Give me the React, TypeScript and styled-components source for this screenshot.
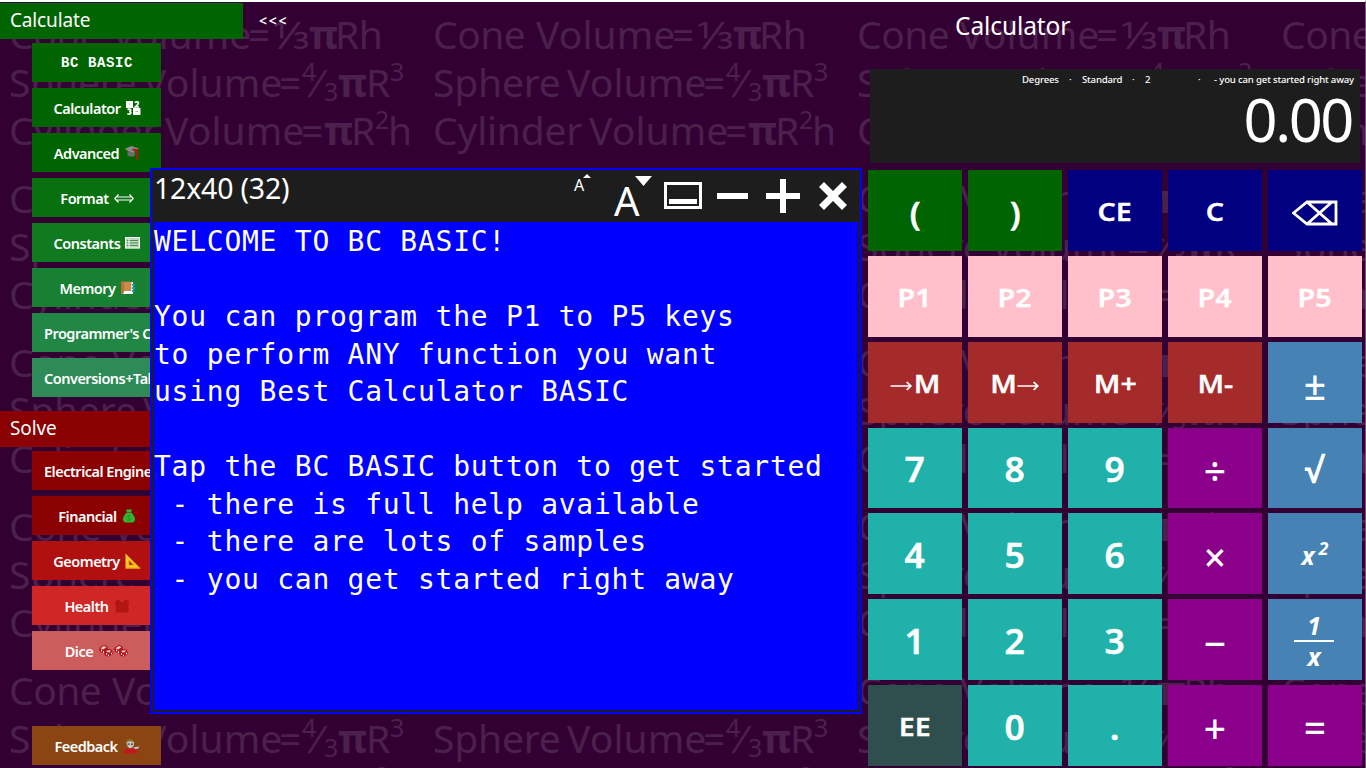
import React from 'react';
import styled, { createGlobalStyle, css } from 'styled-components';

const GlobalStyle = createGlobalStyle`
  *, *::before, *::after { box-sizing: border-box; }
  body { margin: 0; background: #330033; overflow: hidden; }
`;

const UI = `"Noto Sans", "Open Sans", sans-serif`;

const Page = styled.div`
  position: relative;
  width: 1366px;
  height: 768px;
  overflow: hidden;
  display: flex;
  justify-content: space-between;
  border-top: 2px solid #fff;
  border-right: 1px solid #77587a;
  background: #330033;
  color: #fff;
  font-family: ${UI};
`;

/* ---------- formula wallpaper ---------- */

const Wallpaper = styled.div`
  position: absolute;
  inset: 0;
  display: grid;
  grid-template-columns: repeat(4, 424px);
  grid-auto-rows: 164px;
  padding: 8px 0 0 9px;
  color: #4c204c;
  font-size: 39px;
  line-height: 48px;
  white-space: pre;
  overflow: hidden;
`;

const Formula = styled.div`
  display: flex;
  height: 48px;
`;

const Term = styled.span<{ $w: number; $ls?: number }>`
  flex: none;
  width: ${(p) => p.$w}px;
  letter-spacing: ${(p) => p.$ls ?? 0}px;
`;

const Pi = styled(Term)`
  font-weight: 700;
`;

const Raised = styled(Term)`
  font-size: 25px;
  line-height: 24px;
  padding-top: 1px;
`;

const Lowered = styled(Term)`
  font-size: 25px;
  line-height: 24px;
  padding-top: 21px;
`;

const Third = styled(Term)`
  transform: scaleX(1.17);
  transform-origin: 0 50%;
`;

const FormulaBlock = () => (
  <div>
    <Formula>
      <Term $w={103} $ls={-0.5}>Cone</Term>
      <Term $w={136} $ls={0.1}>Volume</Term>
      <Term $w={25}>=</Term>
      <Third $w={36}>⅓</Third>
      <Pi $w={26}>π</Pi>
      <Term $w={50} $ls={-0.6}>Rh</Term>
    </Formula>
    <Formula>
      <Term $w={134} $ls={-0.2}>Sphere</Term>
      <Term $w={136} $ls={0.1}>Volume</Term>
      <Term $w={23}>=</Term>
      <Raised $w={13}>4</Raised>
      <Term $w={9}>⁄</Term>
      <Lowered $w={14}>3</Lowered>
      <Pi $w={28}>π</Pi>
      <Term $w={24}>R</Term>
      <Raised $w={16}>3</Raised>
    </Formula>
    <Formula>
      <Term $w={156} $ls={-0.2}>Cylinder</Term>
      <Term $w={136} $ls={0.1}>Volume</Term>
      <Term $w={23}>=</Term>
      <Pi $w={27}>π</Pi>
      <Term $w={24}>R</Term>
      <Raised $w={13}>2</Raised>
      <Term $w={24}>h</Term>
    </Formula>
  </div>
);

/* ---------- sidebar ---------- */

const Sidebar = styled.nav`
  position: relative;
  width: 300px;
  height: 766px;
  display: flex;
  flex-direction: column;
  padding: 1px 0;
`;

const HeaderRow = styled.div`
  display: flex;
  align-items: center;
  gap: 16px;
`;

const Section = styled.h2<{ $bg: string }>`
  margin: 0;
  width: 243px;
  height: 36px;
  padding-left: 10px;
  background: ${(p) => p.$bg};
  font-size: 19px;
  font-weight: 400;
  line-height: 34px;
  letter-spacing: -0.15px;
`;

const Collapse = styled.span`
  font-size: 14px;
  font-weight: 600;
  letter-spacing: 1.8px;
  line-height: 34px;
`;

const Items = styled.div<{ $gapAfter?: number }>`
  display: flex;
  flex-direction: column;
  gap: 6px;
  padding: 4px 0 0 32px;
  margin-bottom: ${(p) => p.$gapAfter ?? 0}px;
`;

const Item = styled.button<{ $bg: string; $mono?: boolean }>`
  display: flex;
  align-items: center;
  justify-content: safe center;
  gap: 5px;
  width: 129px;
  height: 39px;
  padding: 1px 11px 0 12px;
  border: 0;
  overflow: hidden;
  background: ${(p) => p.$bg};
  color: #fff;
  font-family: ${UI};
  font-size: 14.5px;
  font-weight: 600;
  letter-spacing: -0.5px;
  white-space: nowrap;
  svg { flex: none; }
  ${(p) =>
    p.$mono &&
    css`
      padding-top: 0;
      font-family: "Liberation Mono", monospace;
      font-size: 14px;
      font-weight: 700;
      letter-spacing: 0.6px;
    `}
`;

const Digits = () => (
  <svg width="15" height="14" viewBox="0 0 15 14">
    <rect x="0" y="0" width="7" height="7" fill="#fff" />
    <rect x="7" y="7" width="7.5" height="7" fill="#fff" />
    <rect x="3" y="2" width="1" height="2" fill="#b9d6b9" />
    <path d="M8.600 1.600Q11 .3 12.400 1.500 12.600 3.200 9.300 6H13M1.500 8.400Q5 7.600 4.600 9.400 4.400 10.300 3 10.400 5.200 10.600 4.800 12 4 13.600 1.300 12.700" fill="none" stroke="#fff" strokeWidth="1.700" />
    <path d="M9.500 10.500h2.500" stroke="#9cc49c" />
  </svg>
);
const Cap = () => (
  <svg width="16" height="16" viewBox="0 0 16 16">
    <path d="M3.500 5v5.500Q7.500 13 11 10.500V5z" fill="#6b6b6b" />
    <path d="M.5 4L7.500 1 15 3.500 8.500 7.500z" fill="#8d8d8d" />
    <path d="M8.500 4.500L13.200 5.200V14.500" fill="none" stroke="#b3190e" strokeWidth="2" />
  </svg>
);
const DoubleArrow = () => (
  <svg width="20" height="9" viewBox="0 0 20 9">
    <path d="M4.500 .5L.8 4.500l3.700 4M15.500 .5l3.700 4-3.700 4M3 3h14M3 6h14" fill="none" stroke="#fff" strokeWidth="1.200" />
  </svg>
);
const Table = () => (
  <svg width="15" height="12" viewBox="0 0 15 12">
    <rect x=".5" y=".5" width="14" height="10.600" fill="#b9d8bc" stroke="#fff" />
    <path d="M2 3.500h11M2 6h11M2 8.500h11" stroke="#2f7d3b" strokeWidth=".8" />
    <path d="M4 2v8" stroke="#fff" />
  </svg>
);
const Book = () => (
  <svg width="14" height="14" viewBox="0 0 14 14">
    <path d="M2 1h10v12H2z" fill="#fff" />
    <path d="M0 1.500Q0 .3 1.200 .3H3V11L2 13H.8Q0 13 0 12z" fill="#b87333" />
    <path d="M3 .8H10.400V10H3z" fill="#c98a4b" />
    <path d="M11 4h2.500M11 7h3M11 10h2.500" stroke="#19a5c9" strokeWidth="1.800" />
  </svg>
);
const MoneyBag = () => (
  <svg width="14" height="14" viewBox="0 0 14 14">
    <path d="M4 .5h6L9.200 3H4.800zM4.600 3.500h4.800Q13.200 7.500 13 10.500 12.600 13.600 9.600 13.600H4.400Q1.200 13.600 1 10.500.8 7.500 4.600 3.500z" fill="#2fb52f" />
    <path d="M8.600 6.500Q5.500 5.800 5.600 7.600 7 8.900 8.300 9.800 8.400 11.600 5.400 11" fill="none" stroke="#1e8a25" strokeWidth=".9" />
  </svg>
);
const SetSquare = () => (
  <svg width="16" height="16" viewBox="0 0 16 16">
    <path d="M.5 .5V15.500H15.500z" fill="#ffc928" />
    <path d="M4 7.500V12H8.600z" fill="#b01010" stroke="#d98b00" strokeWidth=".8" />
    <path d="M.5 15h15" stroke="#e99a12" />
  </svg>
);
const HealthMark = () => (
  <svg width="16" height="15" viewBox="0 0 16 15">
    <path d="M2 1.500L4.500 .8 8 3.400 11.500 .8 14 1 15.200 3.500 14 7.500 15 11 13 14 9.500 13 8 14 6 13 3 14 1.300 11.500 2.200 8 .8 4z" fill="#b01712" />
  </svg>
);
const Dice = () => (
  <svg width="31" height="14" viewBox="0 0 31 14">
    {[0, 15].map((x) => (
      <g key={x} transform={`translate(${x} 0)`}>
        <path d="M1 4L6 .7 9.500 2.500 10 5 14 5.500 15 10 10.500 13 7 11.500 6 9 2 8z" fill="#b5161a" />
        <path d="M2.500 4.300L6 2l2.500 1.300L5 5.600zM9 6.500L13 6.300 11.500 8.500 8.500 8z" fill="#fff" opacity=".8" />
        <path d="M3 6.500h1M5 8h1M8 10h1M10 11.500h1M13 9.500h1M5 3.500h1" stroke="#fff" strokeWidth="1.300" />
      </g>
    ))}
  </svg>
);
const Person = () => (
  <svg width="17" height="16" viewBox="0 0 17 16">
    <path d="M3 7Q2 1 7 .8 12 1 11.500 6L10 4H4.500z" fill="#8c6a1c" />
    <path d="M3.500 4.500Q7 2 11 4.500 11.500 9 7.500 10.500 3.800 9.500 3.500 4.500z" fill="#c4c4c4" />
    <path d="M4.500 6.200h2M8 6.200h2" stroke="#333" strokeWidth="1.300" />
    <path d="M.5 15.500Q1 11 5 10.600h5Q14 11 14.500 15.500z" fill="#c4161c" />
    <path d="M10.500 9.500L16.500 8.500 15 10.500 12 11z" fill="#d0d0d0" />
  </svg>
);

type Entry = { label: string; bg: string; icon?: React.ReactNode; mono?: boolean };

const calculate: Entry[] = [
  { label: 'BC BASIC', bg: '#006400', mono: true },
  { label: 'Calculator', bg: '#006400', icon: <Digits /> },
  { label: 'Advanced', bg: '#006400', icon: <Cap /> },
  { label: 'Format', bg: '#08700f', icon: <DoubleArrow /> },
  { label: 'Constants', bg: '#107a20', icon: <Table /> },
  { label: 'Memory', bg: '#188032', icon: <Book /> },
  { label: "Programmer's Calculator", bg: '#208744' },
  { label: 'Conversions+Tables', bg: '#2e8b57' },
];

const solve: Entry[] = [
  { label: 'Electrical Engineering', bg: '#8b0000' },
  { label: 'Financial', bg: '#8b0000', icon: <MoneyBag /> },
  { label: 'Geometry', bg: '#b01010', icon: <SetSquare /> },
  { label: 'Health', bg: '#cf2626', icon: <HealthMark /> },
  { label: 'Dice', bg: '#cd5c5c', icon: <Dice /> },
];

const Menu = ({ entries, gapAfter }: { entries: Entry[]; gapAfter?: number }) => (
  <Items $gapAfter={gapAfter}>
    {entries.map((e) => (
      <Item key={e.label} $bg={e.bg} $mono={e.mono}>
        {e.label}
        {e.icon}
      </Item>
    ))}
  </Items>
);

/* ---------- BASIC console window ---------- */

const Window = styled.section`
  position: absolute;
  left: 150px;
  top: 166px;
  width: 712px;
  height: 546px;
  display: flex;
  flex-direction: column;
  padding: 0 2px 2px;
  border: 2px solid #0000ff;
  background: #1d1d1d;
`;

const TitleBar = styled.header`
  display: flex;
  justify-content: space-between;
  height: 52px;
  padding: 0 10px 0 0;
`;

const WindowTitle = styled.span`
  font-size: 28.5px;
  line-height: 36px;
  letter-spacing: -0.2px;
`;

const Tools = styled.div`
  display: flex;
  height: 52px;
`;

const FontTool = styled.div<{ $size: number; $w: number; $top: number }>`
  display: flex;
  width: ${(p) => p.$w}px;
  padding-top: ${(p) => p.$top}px;
  font-size: ${(p) => p.$size}px;
  line-height: 1;
  svg { flex: none; }
`;

const GrowMark = styled.svg`
  margin: -3px 0 0 -1px;
`;

const ShrinkMark = styled.svg`
  margin: -5px 0 0 -5px;
`;

const Screen = styled.pre`
  flex: 1;
  margin: 0;
  padding: 1px 0 0;
  background: #0000ff;
  font-family: "DejaVu Sans Mono", monospace;
  font-size: 28px;
  line-height: 37.5px;
  letter-spacing: 0.74px;
`;

const program = `WELCOME TO BC BASIC!

You can program the P1 to P5 keys
to perform ANY function you want
using Best Calculator BASIC

Tap the BC BASIC button to get started
 - there is full help available
 - there are lots of samples
 - you can get started right away`;

/* ---------- calculator ---------- */

const Calculator = styled.main`
  position: relative;
  width: 497px;
  height: 766px;
  display: flex;
  flex-direction: column;
`;

const Title = styled.h1`
  margin: 0;
  height: 67px;
  padding: 7px 0 0 87px;
  font-size: 24.5px;
  font-weight: 400;
  line-height: 34px;
  letter-spacing: -0.1px;
`;

const Display = styled.div`
  width: 490px;
  height: 94px;
  margin: 0 0 7.3px 2px;
  background: #1d1d1d;
`;

const Status = styled.div`
  display: flex;
  height: 20px;
  padding-left: 152px;
  font-size: 9.6px;
  font-weight: 500;
  line-height: 21px;
  white-space: pre;
`;

const StatusItem = styled.span<{ $w: number }>`
  flex: none;
  width: ${(p) => p.$w}px;
  letter-spacing: -0.17px;
`;

const Value = styled.div`
  padding-right: 8px;
  font-size: 59.5px;
  line-height: 59px;
  letter-spacing: -2.4px;
  text-align: right;
`;

const Keys = styled.div`
  display: grid;
  grid-template-columns: repeat(5, 94px);
  grid-template-rows: repeat(7, 80.8px);
  gap: 5px 6px;
`;

const Key = styled.button<{ $bg: string; $size?: number; $italic?: boolean }>`
  display: flex;
  align-items: center;
  justify-content: center;
  padding: 4px 0 0;
  border: 0;
  background: ${(p) => p.$bg};
  color: #fff;
  font-family: ${UI};
  font-size: ${(p) => p.$size ?? 24.5}px;
  font-weight: 700;
  font-style: ${(p) => (p.$italic ? 'italic' : 'normal')};
  line-height: 1;
`;

const Wide = styled.span`
  display: inline-flex;
  align-items: center;
  font-weight: 600;
  -webkit-text-stroke: 0.3px #fff;
  transform: scaleX(1.17);
`;

const Digit = styled.span`
  font-weight: 600;
  -webkit-text-stroke: 0.4px #fff;
  transform: scaleX(1.06);
`;

const Op = styled.span`
  padding-top: 1px;
  font-weight: 500;
`;

const Root = styled.span`
  margin-left: -3px;
  font-weight: 700;
`;

const Exponent = styled.span`
  font-size: 18px;
  margin: -16px 0 0 4px;
`;

const Fraction = styled.span`
  display: flex;
  flex-direction: column;
  align-items: center;
  width: 40px;
  margin-left: -2px;
  padding-top: 2px;
  line-height: 22px;
`;

const Over = styled.span`
  width: 40px;
  height: 27px;
  border-bottom: 2px solid #fff;
`;

const Under = styled.span`
  height: 29px;
  line-height: 29px;
`;

const ArrowMark = styled.svg`
  margin-top: 3px;
`;

const Arrow = () => (
  <ArrowMark width="20" height="12" viewBox="0 0 20 12">
    <path d="M0 6h17.500M14 2l3.500 4L14 10" fill="none" stroke="#fff" strokeWidth="1.600" />
  </ArrowMark>
);

const Backspace = () => (
  <svg width="46" height="26" viewBox="0 0 46 26">
    <path d="M15 2H44V24H15L1.500 13zM15 2L40 24M40 2L15 24" fill="none" stroke="#fff" strokeWidth="2.800" />
  </svg>
);

const green = '#006400';
const navy = '#000080';
const pink = '#ffc0cb';
const brown = '#a52a2a';
const steel = '#4682b4';
const teal = '#20b2aa';
const purple = '#8b008b';

type KeyDef = { id: string; bg: string; size?: number; italic?: boolean; face?: React.ReactNode };

const num = (id: string): KeyDef => ({ id, bg: teal, size: 33.5, face: <Digit>{id}</Digit> });
const op = (id: string, bg = purple): KeyDef => ({ id, bg, size: 39, face: <Op>{id}</Op> });

const keys: KeyDef[] = [
  { id: '(', bg: green, size: 32, face: <Digit>(</Digit> },
  { id: ')', bg: green, size: 32, face: <Digit>)</Digit> },
  { id: 'CE', bg: navy },
  { id: 'C', bg: navy },
  { id: 'back', bg: navy, face: <Backspace /> },
  ...['P1', 'P2', 'P3', 'P4', 'P5'].map((id) => ({ id, bg: pink })),
  { id: 'store', bg: brown, face: <Wide><Arrow />M</Wide> },
  { id: 'recall', bg: brown, face: <Wide>M<Arrow /></Wide> },
  { id: 'M+', bg: brown },
  { id: 'M-', bg: brown },
  op('±', steel),
  num('7'), num('8'), num('9'), op('÷'),
  { id: 'root', bg: steel, size: 34, face: <Root>√</Root> },
  num('4'), num('5'), num('6'), op('×'),
  { id: 'square', bg: steel, italic: true, face: <>x<Exponent>2</Exponent></> },
  num('1'), num('2'), num('3'), op('−'),
  { id: 'inverse', bg: steel, italic: true, face: <Fraction><Over>1</Over><Under>x</Under></Fraction> },
  { id: 'EE', bg: '#2f4f4f' },
  num('0'), num('.'), op('+'), op('='),
];

export default function App() {
  return (
    <>
      <GlobalStyle />
      <Page>
        <Wallpaper>
          {Array.from({ length: 20 }, (_, i) => (
            <FormulaBlock key={i} />
          ))}
        </Wallpaper>

        <Sidebar>
          <HeaderRow>
            <Section $bg="#006400">Calculate</Section>
            <Collapse>&lt;&lt;&lt;</Collapse>
          </HeaderRow>
          <Menu entries={calculate} gapAfter={14} />
          <Section $bg="#8b0000">Solve</Section>
          <Menu entries={solve} gapAfter={52} />
          <Menu entries={[{ label: 'Feedback', bg: '#8b4513', icon: <Person /> }]} />
        </Sidebar>

        <Calculator>
          <Title>Calculator</Title>
          <Display>
            <Status>
              <StatusItem $w={47}>Degrees</StatusItem>
              <StatusItem $w={13}>·</StatusItem>
              <StatusItem $w={50}>Standard</StatusItem>
              <StatusItem $w={13}>·</StatusItem>
              <StatusItem $w={53}>2</StatusItem>
              <StatusItem $w={16}>·</StatusItem>
              <StatusItem $w={142}>- you can get started right away</StatusItem>
            </Status>
            <Value>0.00</Value>
          </Display>
          <Keys>
            {keys.map((k) => (
              <Key key={k.id} $bg={k.bg} $size={k.size} $italic={k.italic}>
                {k.face ?? <Wide>{k.id}</Wide>}
              </Key>
            ))}
          </Keys>
        </Calculator>

        <Window>
          <TitleBar>
            <WindowTitle>12x40 (32)</WindowTitle>
            <Tools>
              <FontTool $size={16} $w={40} $top={7}>
                A
                <GrowMark width="8" height="4" viewBox="0 0 8 4">
                  <path d="M0 4L4 0l4 4z" fill="#fff" />
                </GrowMark>
              </FontTool>
              <FontTool $size={40} $w={50} $top={11}>
                A
                <ShrinkMark width="17" height="10" viewBox="0 0 17 10">
                  <path d="M0 0h17L8.500 10z" fill="#fff" />
                </ShrinkMark>
              </FontTool>
              <svg width="184" height="52" viewBox="0 0 184 52">
                <path d="M1.500 13.500h35v24h-35z" fill="none" stroke="#fff" strokeWidth="3" />
                <path d="M5 31.500h28" stroke="#fff" strokeWidth="5" />
                <path d="M53 26h31M102 26h34M119 9v34" stroke="#fff" strokeWidth="6" />
                <path d="M157.500 14.500l23 23M180.500 14.500l-23 23" stroke="#fff" strokeWidth="7" />
              </svg>
            </Tools>
          </TitleBar>
          <Screen>{program}</Screen>
        </Window>
      </Page>
    </>
  );
}
